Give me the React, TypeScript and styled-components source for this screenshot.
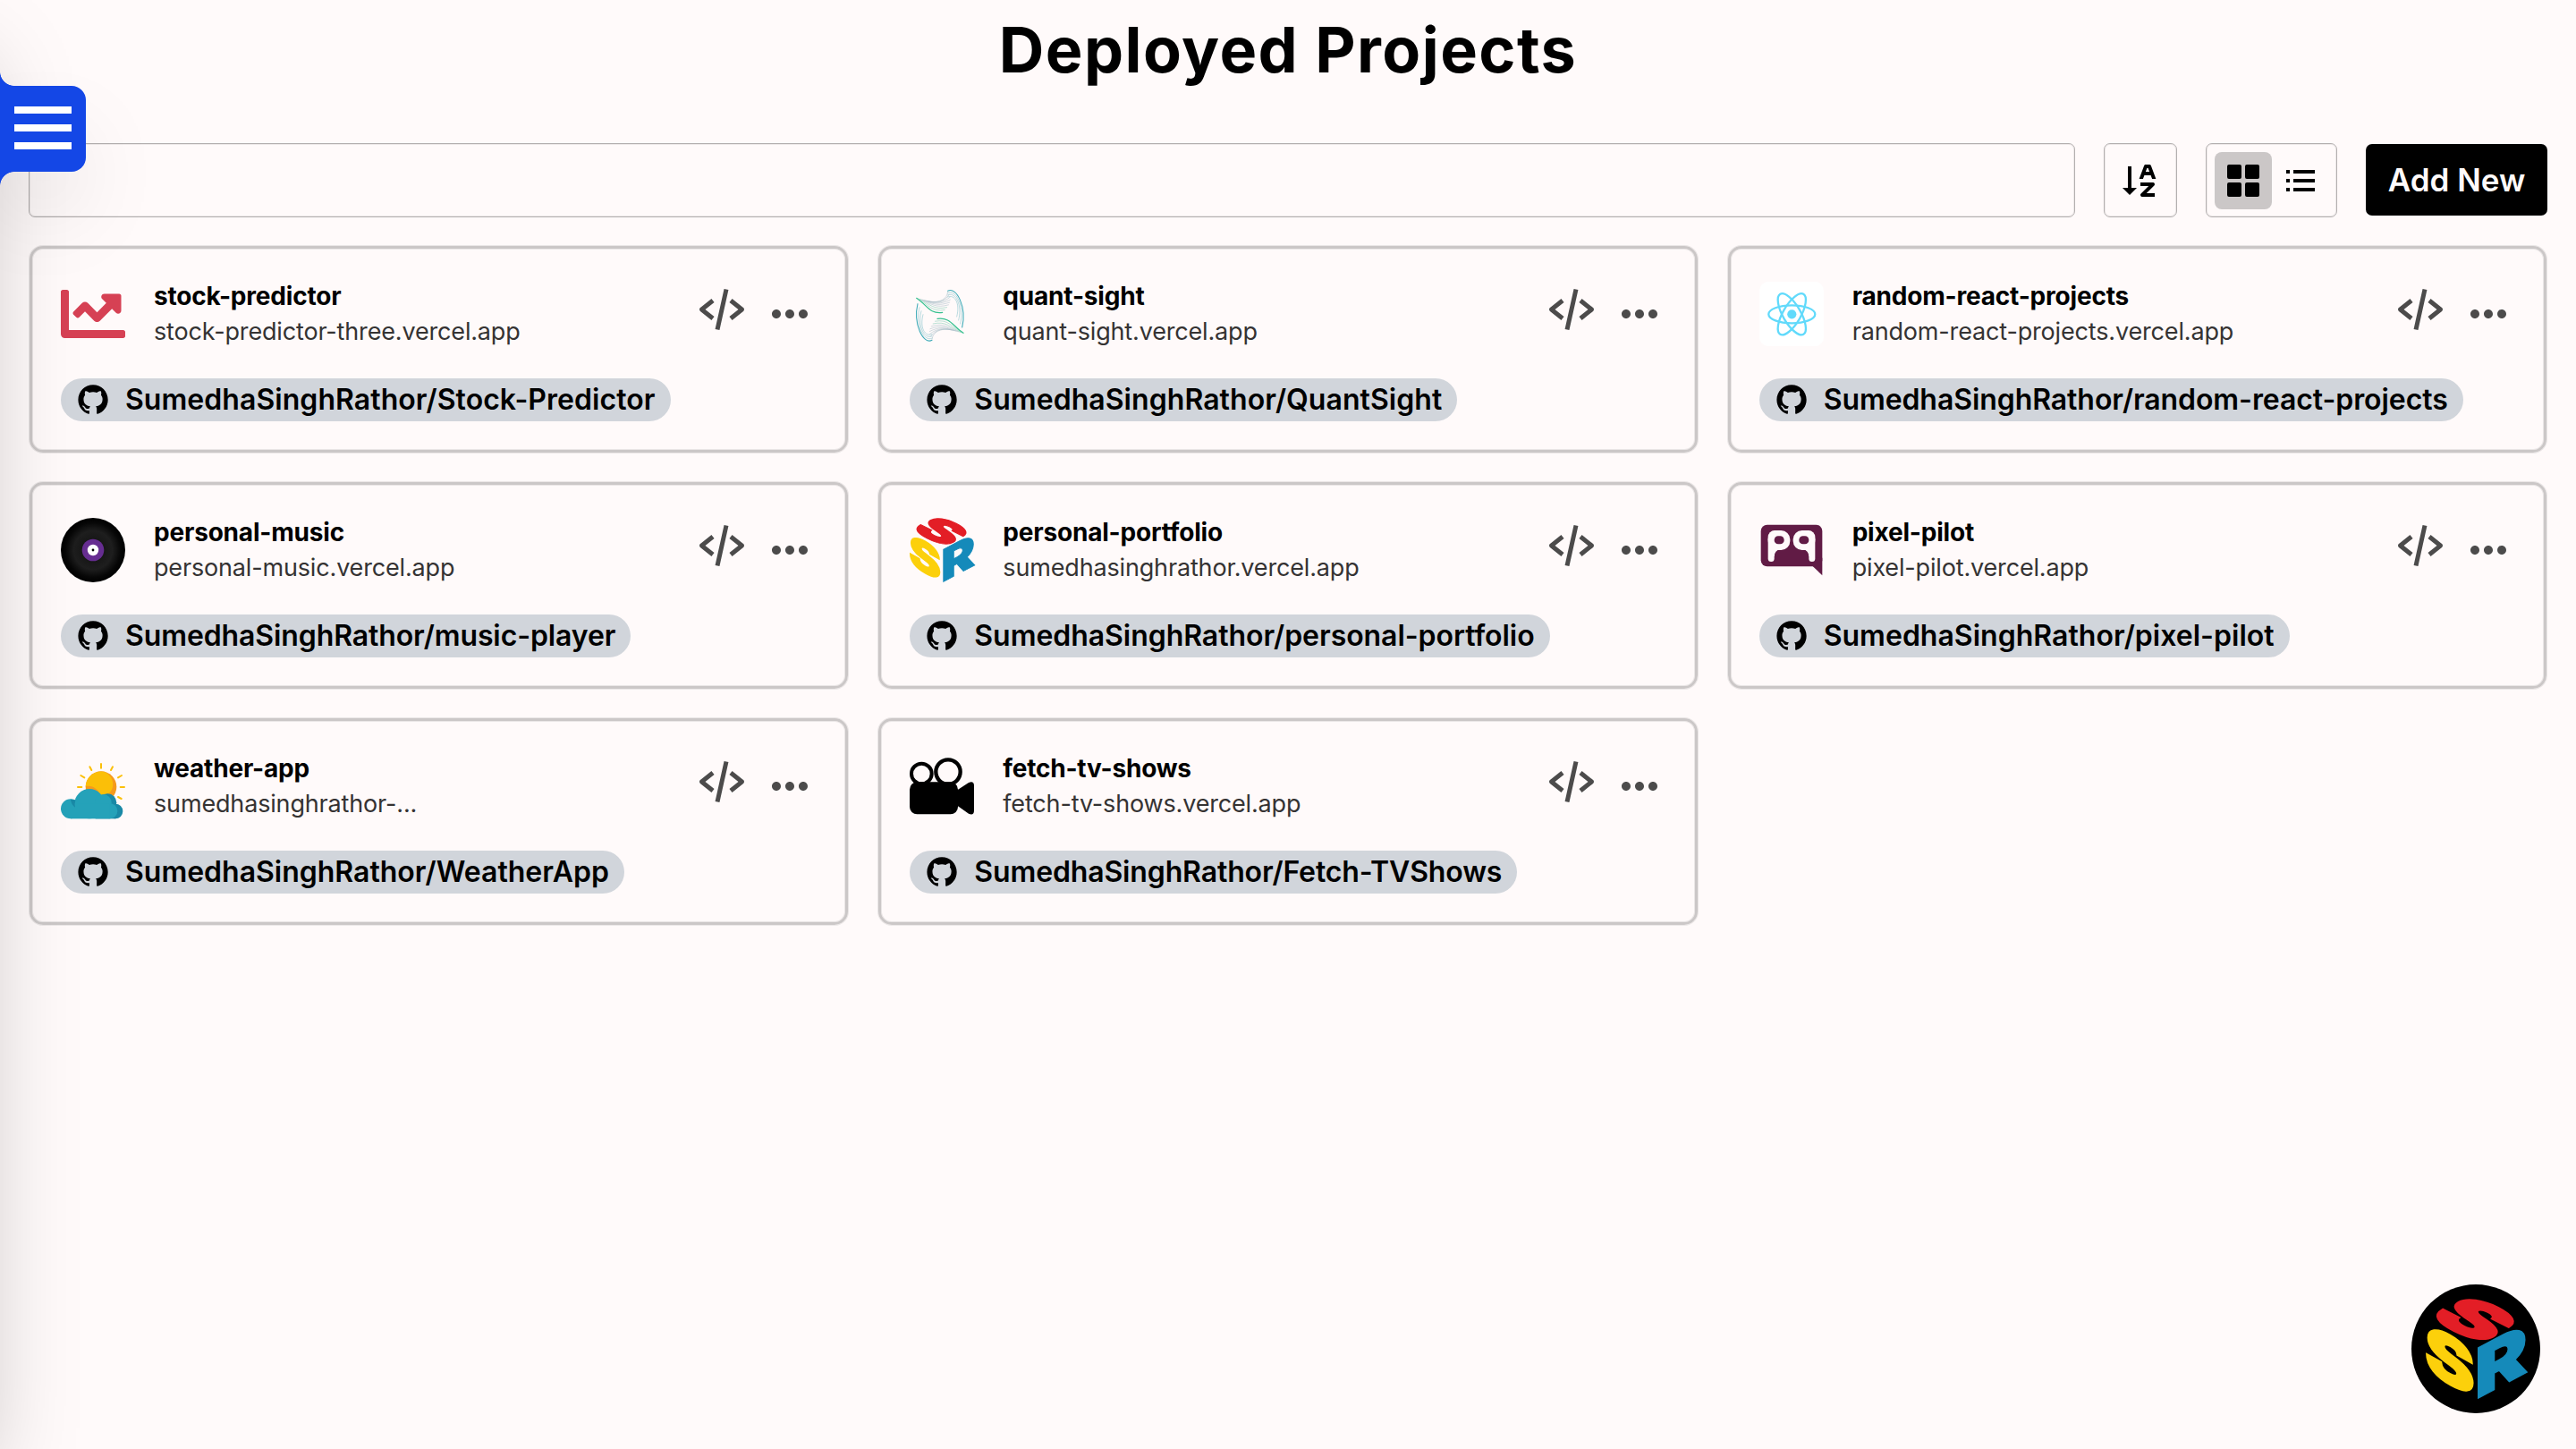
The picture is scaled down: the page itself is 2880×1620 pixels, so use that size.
import React from 'react';
import styled, { createGlobalStyle } from 'styled-components';
import {
  BiSortAZ,
  BiSolidGridAlt,
  BiListUl,
  BiCodeAlt,
  BiDotsHorizontalRounded,
  BiLogoGithub,
  BiMenu,
} from 'react-icons/bi';
import { FaChartLine } from 'react-icons/fa';

const GlobalStyle = createGlobalStyle`
  *, *::before, *::after { box-sizing: border-box; }
  body {
    margin: 0;
    background: #fffafa;
    color: #000;
    font-family: Inter, "Liberation Sans", sans-serif;
    overflow: hidden;
  }
  svg { display: block; flex: none; overflow: visible; }
`;

const Page = styled.main`
  display: flex;
  flex-direction: column;
  height: 1620px;
  padding: 0 32px;
`;

const Title = styled.h1`
  margin: 0 0 48px;
  height: 112px;
  text-align: center;
  font-size: 70px;
  line-height: 112px;
  font-weight: 700;
  letter-spacing: 0.021em;
`;

const Toolbar = styled.div`
  display: flex;
  gap: 32px;
  height: 83px;
  margin-bottom: 32px;
`;

const SearchInput = styled.input`
  flex: 1;
  min-width: 0;
  border: 1px solid #b3afaf;
  border-radius: 7px;
  background: transparent;
  box-shadow: inset 0 0 0 1px rgba(0, 0, 0, 0.07);
  padding: 0 16px;
  font: inherit;
  font-size: 30px;
  outline: none;
`;

const SortButton = styled.button`
  display: flex;
  align-items: center;
  justify-content: center;
  width: 82px;
  padding: 0;
  border: 1px solid #b3afaf;
  border-radius: 7px;
  background: transparent;
  box-shadow: inset 0 0 0 1px rgba(0, 0, 0, 0.07);
  color: #000;
`;

const ViewSwitch = styled.div`
  display: flex;
  align-items: center;
  justify-content: center;
  width: 147px;
  border: 1px solid #b3afaf;
  border-radius: 7px;
  box-shadow: inset 0 0 0 1px rgba(0, 0, 0, 0.07);
`;

const ViewOption = styled.button<{ $active?: boolean }>`
  display: flex;
  align-items: center;
  justify-content: center;
  width: 64px;
  height: 64px;
  padding: 0;
  border: 0;
  border-radius: 8px;
  color: #000;
  background: ${(p) => (p.$active ? '#cbc7c7' : 'transparent')};
`;

const AddButton = styled.button`
  width: 203px;
  height: 80px;
  margin-top: 1px;
  padding: 0;
  border: 0;
  border-radius: 7px;
  background: #000;
  color: #fffafa;
  font: inherit;
  font-size: 35px;
  line-height: 80px;
  font-weight: 600;
`;

const Grid = styled.section`
  display: grid;
  grid-template-columns: repeat(3, 1fr);
  gap: 33px 34px;
  padding: 0 1px;
`;

const Card = styled.article`
  display: flex;
  flex-direction: column;
  justify-content: space-between;
  align-items: stretch;
  height: 231px;
  padding: 32px;
  border: 3px solid #cbc7c7;
  border-radius: 15px;
  box-shadow: 0 0 0 1px rgba(203, 199, 199, 0.4), inset 0 0 0 1px rgba(203, 199, 199, 0.4);
`;

const CardHead = styled.div`
  display: flex;
  align-items: center;
  height: 81px;
`;

const Names = styled.div`
  flex: 1;
  min-width: 0;
  margin: 1px 0 0 32px;
`;

const Name = styled.div`
  font-size: 28px;
  line-height: 40px;
  font-weight: 700;
  letter-spacing: -0.007em;
  white-space: nowrap;
`;

const Url = styled.div`
  font-size: 27px;
  line-height: 40px;
  letter-spacing: -0.006em;
  color: #353333;
  white-space: nowrap;
`;

const Actions = styled.div`
  display: flex;
  align-items: center;
  gap: 16px;
  color: #4c4b4b;

  & > svg:first-child {
    margin-bottom: 10px;
  }
`;

const RepoLink = styled.a<{ $tracking: number }>`
  display: flex;
  align-items: center;
  align-self: flex-start;
  gap: 16px;
  height: 48px;
  padding: 0 17px 0 16px;
  border-radius: 24px;
  background: #d1d5db;
  font-size: 32px;
  line-height: 47px;
  font-weight: 600;
  letter-spacing: ${(p) => p.$tracking}px;
  white-space: nowrap;
`;

const RepoName = styled.span`
  height: 48px;
`;

const Sidebar = styled.aside`
  position: fixed;
  top: 0;
  left: -480px;
  width: 480px;
  height: 1620px;
  background: #1447e6;
  box-shadow: 0 50px 100px -24px rgba(0, 0, 0, 0.25);
  pointer-events: none;
`;

const MenuButton = styled.button`
  position: fixed;
  top: 96px;
  left: 0;
  width: 96px;
  height: 96px;
  padding: 0;
  border: 0;
  border-radius: 0 16px 16px 0;
  background: #1447e6;
  color: #fff;
  box-shadow: 0 50px 100px -24px rgba(0, 0, 0, 0.25);

  &::before,
  &::after {
    content: '';
    position: absolute;
    left: 0;
    width: 16px;
    height: 16px;
  }
  &::before {
    top: -16px;
    background: radial-gradient(circle at 100% 0, transparent 15.5px, #1447e6 16.2px);
  }
  &::after {
    bottom: -16px;
    background: radial-gradient(circle at 100% 100%, transparent 15.5px, #1447e6 16.2px);
  }
  svg {
    margin-top: -2px;
  }
`;

const Badge = styled.a`
  position: fixed;
  right: 40px;
  bottom: 40px;
  display: flex;
  align-items: center;
  justify-content: center;
  width: 144px;
  height: 144px;
  border-radius: 50%;
  background: #000;
`;

const ReactTile = styled.span`
  display: flex;
  width: 72px;
  height: 72px;
  border-radius: 10px;
  background: #fff;
`;

const Letter = styled.text<{ $color: string; $weight?: number }>`
  font-family: Inter, sans-serif;
  font-weight: 900;
  font-size: 100px;
  letter-spacing: 0;
  fill: ${(p) => p.$color};
  stroke: ${(p) => p.$color};
  stroke-width: ${(p) => p.$weight ?? 3};
`;

function SsrLogo({ size }: { size: number }) {
  return (
    <svg width={size} height={size} viewBox="97 96 335 335">
      <Letter $color="#e31e26" transform="matrix(2.84 1.43 -1.94 1.08 97.6 155.3)">S</Letter>
      <Letter $color="#fcd00b" transform="matrix(2.5 1.4 0 2.23 94 334.2)">S</Letter>
      <Letter $color="#158aba" $weight={2} transform="matrix(2.65 -1.41 0 2.31 261 434.5)">R</Letter>
    </svg>
  );
}

function ReactLogo() {
  return (
    <ReactTile>
      <svg width="72" height="72" viewBox="0 0 72 72" fill="none" stroke="#61dafb" strokeWidth="2.3">
        <circle cx="36.3" cy="36.3" r="5.1" fill="#61dafb" stroke="none" />
        {[0, 60, 120].map((angle) => (
          <ellipse key={angle} cx="36.3" cy="36.3" rx="26" ry="10" transform={`rotate(${angle} 36.3 36.3)`} />
        ))}
      </svg>
    </ReactTile>
  );
}

type Pts = number[];
const blend = (a: Pts, b: Pts, t: number) => a.map((v, i) => v + (b[i] - v) * t);
const curve = (p: Pts) =>
  `M${p[0]} ${p[1]}C${p[2]} ${p[3]} ${p[4]} ${p[5]} ${p[6]} ${p[7]}`;
const fanStart: Pts = [135, 98, 170, 120, 178, 152, 216, 146];
const fanEnd: Pts = [176, 109, 214, 116, 238, 100, 241, 78];
const rimOuter: Pts = [240, 74, 270, 58, 304, 130, 288, 196];
const rimInner: Pts = [240, 94, 264, 84, 282, 116, 270, 160];

function fanCurve(t: number) {
  const p = blend(fanStart, fanEnd, t);
  p[6] = 222 + 26 * Math.sin(t * 2.4);
  return curve(p);
}

function QuantLogo() {
  const half = (
    <>
      {Array.from({ length: 9 }, (_, i) => (
        <path
          key={`fan${i}`}
          d={fanCurve(i / 8)}
          stroke={i < 1 ? '#34c08e' : i < 3 ? '#7cc9b0' : '#a9bcc6'}
          strokeWidth={i < 1 ? 3.6 : 1.6}
        />
      ))}
      {Array.from({ length: 4 }, (_, i) => (
        <path
          key={`rim${i}`}
          d={curve(blend(rimOuter, rimInner, i / 3))}
          stroke={i < 1 ? '#3fabb8' : '#8cc5cd'}
          strokeWidth={i < 1 ? 3.2 : 1.8}
        />
      ))}
    </>
  );
  return (
    <svg width="72" height="72" viewBox="112 43 216 216" fill="none" strokeLinecap="round">
      <g>{half}</g>
      <g transform="rotate(180 213.5 156.5)">{half}</g>
    </svg>
  );
}

function VinylLogo() {
  return (
    <svg width="72" height="72" viewBox="0 0 72 72">
      <defs>
        <radialGradient id="vinyl">
          <stop offset="0.3" stopColor="#161616" />
          <stop offset="0.6" stopColor="#1e1e1e" />
          <stop offset="0.85" stopColor="#070707" />
          <stop offset="1" stopColor="#000" />
        </radialGradient>
      </defs>
      <circle cx="36" cy="36" r="36" fill="url(#vinyl)" />
      <circle cx="36" cy="36" r="12.3" fill="#662d91" />
      <circle cx="36" cy="36" r="6.2" fill="#fff" />
      <circle cx="36" cy="36" r="1.4" fill="#000" />
    </svg>
  );
}

function PixelPilotLogo() {
  return (
    <svg width="72" height="72" viewBox="80 56 216 216">
      <rect x="85" y="79" width="206" height="140" rx="21" fill="#611b45" />
      <path d="M258 217L291 249V190H258Z" fill="#611b45" />
      <g fill="#fffafa">
        <rect x="109" y="98" width="74" height="66" rx="30" />
        <rect x="109" y="98" width="50" height="50" rx="22" />
        <rect x="109" y="118" width="21" height="85" rx="10.5" />
        <path d="M128 160H150Q131 165 130 185H128Z" />
        <rect x="193" y="98" width="74" height="66" rx="30" />
        <rect x="217" y="98" width="50" height="50" rx="22" />
        <rect x="246" y="118" width="21" height="85" rx="10.5" />
        <path d="M248 160H226Q245 165 246 185H248Z" />
      </g>
      <rect x="130" y="117" width="33" height="27" rx="13" fill="#611b45" />
      <rect x="213" y="117" width="33" height="27" rx="13" fill="#611b45" />
    </svg>
  );
}

function WeatherLogo() {
  return (
    <svg width="72" height="72" viewBox="84 38 216 216">
      <g stroke="#fbc00a" strokeWidth="6" strokeLinecap="round">
        <path d="M219 71V85M181 81L187 92M258 81L252 92M151 110L163 117M288 110L276 117M141 149H154M284 149H297M276 182L287 188" />
      </g>
      <circle cx="219" cy="148" r="52" fill="#f59a1d" />
      <path d="M167 148A52 52 0 0 1 231 98C268 116 264 160 243 171L219 176C205 150 185 142 168 146Z" fill="#fbbf08" />
      <g fill="#1a89a6">
        <circle cx="241" cy="201" r="30" />
        <circle cx="267" cy="230" r="25" />
        <rect x="200" y="215" width="68" height="40" />
      </g>
      <g fill="#25a2b9">
        <circle cx="117" cy="222" r="33" />
        <circle cx="180" cy="205" r="50" />
        <circle cx="226" cy="201" r="28" />
        <circle cx="248" cy="229" r="26" />
        <rect x="117" y="205" width="131" height="50" />
      </g>
      <path d="M117 190Q131 191 133 193Q129 204 132 217Q118 206 117 190Z" fill="#1a89a6" />
    </svg>
  );
}

function CameraLogo() {
  return (
    <svg width="72" height="72" viewBox="52 38 216 216">
      <circle cx="92" cy="104" r="34" fill="none" stroke="#000" strokeWidth="12" />
      <circle cx="181" cy="98" r="41" fill="none" stroke="#000" strokeWidth="13" />
      <rect x="52" y="132" width="162" height="108" rx="25" />
      <path d="M212 159L250 134Q267 127 268 143V229Q267 245 250 238L212 211Z" />
    </svg>
  );
}

const projects = [
  { name: 'stock-predictor', url: 'stock-predictor-three.vercel.app', repo: 'Stock-Predictor', tracking: 0.05, logo: <FaChartLine size={72} color="#d64154" /> },
  { name: 'quant-sight', url: 'quant-sight.vercel.app', repo: 'QuantSight', tracking: 0.05, logo: <QuantLogo /> },
  { name: 'random-react-projects', url: 'random-react-projects.vercel.app', repo: 'random-react-projects', tracking: -0.08, logo: <ReactLogo /> },
  { name: 'personal-music', url: 'personal-music.vercel.app', repo: 'music-player', tracking: -0.11, logo: <VinylLogo /> },
  { name: 'personal-portfolio', url: 'sumedhasinghrathor.vercel.app', repo: 'personal-portfolio', tracking: -0.05, logo: <SsrLogo size={72} /> },
  { name: 'pixel-pilot', url: 'pixel-pilot.vercel.app', repo: 'pixel-pilot', tracking: 0.02, logo: <PixelPilotLogo /> },
  { name: 'weather-app', url: 'sumedhasinghrathor-...', repo: 'WeatherApp', tracking: -0.01, logo: <WeatherLogo /> },
  { name: 'fetch-tv-shows', url: 'fetch-tv-shows.vercel.app', repo: 'Fetch-TVShows', tracking: -0.14, logo: <CameraLogo /> },
];

export default function App() {
  return (
    <>
      <GlobalStyle />
      <Page>
        <Title>Deployed Projects</Title>
        <Toolbar>
          <SearchInput />
          <SortButton>
            <BiSortAZ size={48} />
          </SortButton>
          <ViewSwitch>
            <ViewOption $active>
              <BiSolidGridAlt size={48} />
            </ViewOption>
            <ViewOption>
              <BiListUl size={48} />
            </ViewOption>
          </ViewSwitch>
          <AddButton>Add New</AddButton>
        </Toolbar>
        <Grid>
          {projects.map((project) => (
            <Card key={project.name}>
              <CardHead>
                {project.logo}
                <Names>
                  <Name>{project.name}</Name>
                  <Url>{project.url}</Url>
                </Names>
                <Actions>
                  <BiCodeAlt size={60} />
                  <BiDotsHorizontalRounded size={60} />
                </Actions>
              </CardHead>
              <RepoLink $tracking={project.tracking}>
                <BiLogoGithub size={40} />
                <RepoName>SumedhaSinghRathor/{project.repo}</RepoName>
              </RepoLink>
            </Card>
          ))}
        </Grid>
      </Page>
      <Sidebar />
      <MenuButton>
        <BiMenu size={96} />
      </MenuButton>
      <Badge>
        <SsrLogo size={112} />
      </Badge>
    </>
  );
}
